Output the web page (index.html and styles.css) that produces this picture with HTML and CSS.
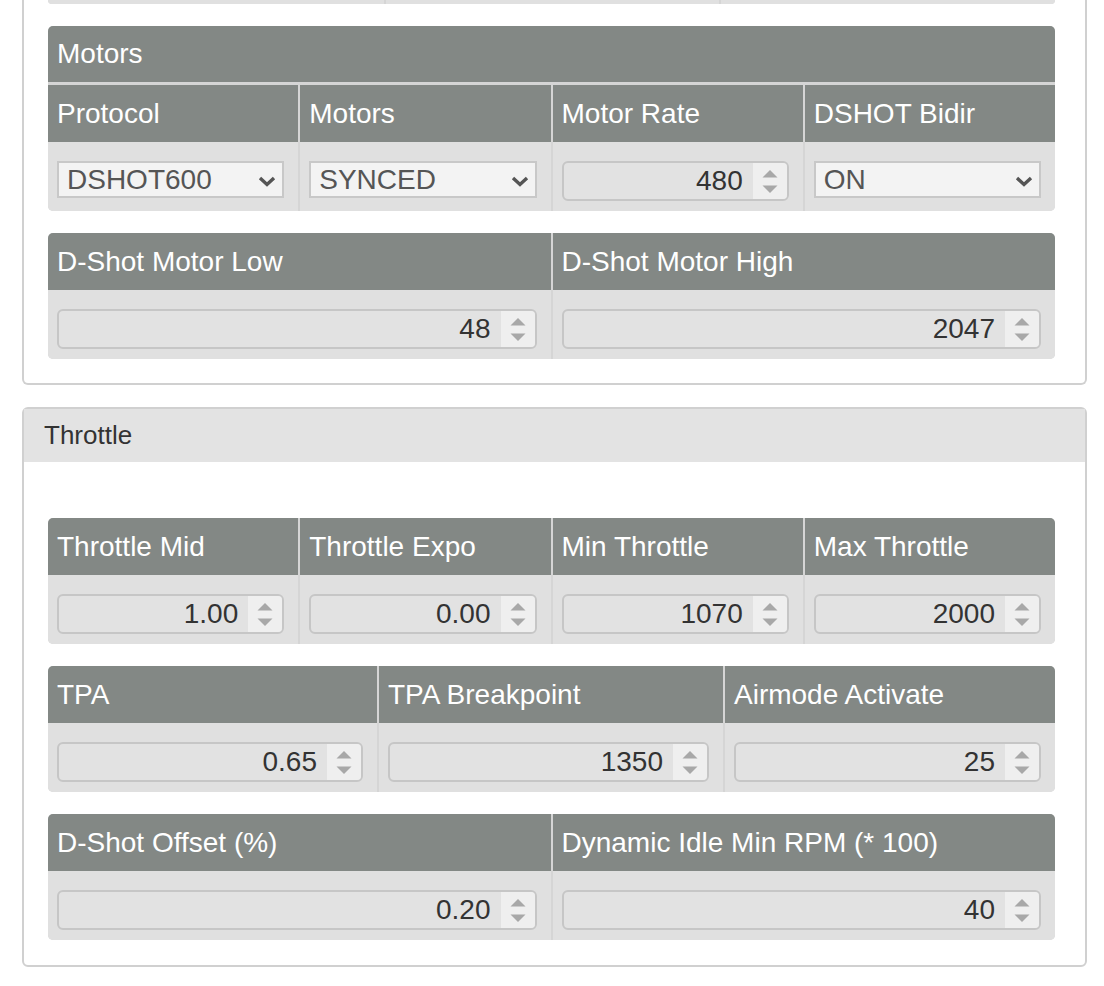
FILE: index.html
```html
<!DOCTYPE html>
<html lang="en">
<head>
  <meta charset="UTF-8">
  <title>Motors / Throttle</title>
  <link rel="stylesheet" href="styles.css">
</head>
<body>
  <div class="page">

    <!-- 모터 설정 (위쪽은 스크롤로 잘림) -->
    <div class="panel cut">
      <div class="panel-body">
        <div class="tbl sliver">
          <div class="tbl-grid cols-3">
            <div class="td"></div>
            <div class="td"></div>
            <div class="td"></div>
          </div>
        </div>

        <div class="tbl">
          <div class="tbl-title">Motors</div>
          <div class="tbl-grid cols-4">
            <div class="th">Protocol</div>
            <div class="th">Motors</div>
            <div class="th">Motor Rate</div>
            <div class="th">DSHOT Bidir</div>

            <div class="td">
              <div class="sel"><span>DSHOT600</span><svg class="chev" width="18" height="11" viewBox="0 0 18 11"><polyline points="2,2 9,8.5 16,2" /></svg></div>
            </div>
            <div class="td">
              <div class="sel"><span>SYNCED</span><svg class="chev" width="18" height="11" viewBox="0 0 18 11"><polyline points="2,2 9,8.5 16,2" /></svg></div>
            </div>
            <div class="td">
              <div class="num"><span class="num-val">480</span><span class="spin"><svg width="34" height="36" viewBox="0 0 34 36"><polygon points="9.5,14.5 24.5,14.5 17,7" /><polygon points="9.5,22.5 24.5,22.5 17,30" /></svg></span></div>
            </div>
            <div class="td">
              <div class="sel"><span>ON</span><svg class="chev" width="18" height="11" viewBox="0 0 18 11"><polyline points="2,2 9,8.5 16,2" /></svg></div>
            </div>
          </div>
        </div>

        <div class="tbl">
          <div class="tbl-grid cols-2">
            <div class="th">D-Shot Motor Low</div>
            <div class="th">D-Shot Motor High</div>

            <div class="td">
              <div class="num"><span class="num-val">48</span><span class="spin"><svg width="34" height="36" viewBox="0 0 34 36"><polygon points="9.5,14.5 24.5,14.5 17,7" /><polygon points="9.5,22.5 24.5,22.5 17,30" /></svg></span></div>
            </div>
            <div class="td">
              <div class="num"><span class="num-val">2047</span><span class="spin"><svg width="34" height="36" viewBox="0 0 34 36"><polygon points="9.5,14.5 24.5,14.5 17,7" /><polygon points="9.5,22.5 24.5,22.5 17,30" /></svg></span></div>
            </div>
          </div>
        </div>
      </div>
    </div>

    <!-- 스로틀 설정 -->
    <div class="panel">
      <div class="panel-head">Throttle</div>
      <div class="panel-body spaced">
        <div class="tbl">
          <div class="tbl-grid cols-4">
            <div class="th">Throttle Mid</div>
            <div class="th">Throttle Expo</div>
            <div class="th">Min Throttle</div>
            <div class="th">Max Throttle</div>

            <div class="td">
              <div class="num"><span class="num-val">1.00</span><span class="spin"><svg width="34" height="36" viewBox="0 0 34 36"><polygon points="9.5,14.5 24.5,14.5 17,7" /><polygon points="9.5,22.5 24.5,22.5 17,30" /></svg></span></div>
            </div>
            <div class="td">
              <div class="num"><span class="num-val">0.00</span><span class="spin"><svg width="34" height="36" viewBox="0 0 34 36"><polygon points="9.5,14.5 24.5,14.5 17,7" /><polygon points="9.5,22.5 24.5,22.5 17,30" /></svg></span></div>
            </div>
            <div class="td">
              <div class="num"><span class="num-val">1070</span><span class="spin"><svg width="34" height="36" viewBox="0 0 34 36"><polygon points="9.5,14.5 24.5,14.5 17,7" /><polygon points="9.5,22.5 24.5,22.5 17,30" /></svg></span></div>
            </div>
            <div class="td">
              <div class="num"><span class="num-val">2000</span><span class="spin"><svg width="34" height="36" viewBox="0 0 34 36"><polygon points="9.5,14.5 24.5,14.5 17,7" /><polygon points="9.5,22.5 24.5,22.5 17,30" /></svg></span></div>
            </div>
          </div>
        </div>

        <div class="tbl">
          <div class="tbl-grid cols-tpa">
            <div class="th">TPA</div>
            <div class="th">TPA Breakpoint</div>
            <div class="th">Airmode Activate</div>

            <div class="td">
              <div class="num"><span class="num-val">0.65</span><span class="spin"><svg width="34" height="36" viewBox="0 0 34 36"><polygon points="9.5,14.5 24.5,14.5 17,7" /><polygon points="9.5,22.5 24.5,22.5 17,30" /></svg></span></div>
            </div>
            <div class="td">
              <div class="num"><span class="num-val">1350</span><span class="spin"><svg width="34" height="36" viewBox="0 0 34 36"><polygon points="9.5,14.5 24.5,14.5 17,7" /><polygon points="9.5,22.5 24.5,22.5 17,30" /></svg></span></div>
            </div>
            <div class="td">
              <div class="num"><span class="num-val">25</span><span class="spin"><svg width="34" height="36" viewBox="0 0 34 36"><polygon points="9.5,14.5 24.5,14.5 17,7" /><polygon points="9.5,22.5 24.5,22.5 17,30" /></svg></span></div>
            </div>
          </div>
        </div>

        <div class="tbl">
          <div class="tbl-grid cols-2">
            <div class="th">D-Shot Offset (%)</div>
            <div class="th">Dynamic Idle Min RPM (* 100)</div>

            <div class="td">
              <div class="num"><span class="num-val">0.20</span><span class="spin"><svg width="34" height="36" viewBox="0 0 34 36"><polygon points="9.5,14.5 24.5,14.5 17,7" /><polygon points="9.5,22.5 24.5,22.5 17,30" /></svg></span></div>
            </div>
            <div class="td">
              <div class="num"><span class="num-val">40</span><span class="spin"><svg width="34" height="36" viewBox="0 0 34 36"><polygon points="9.5,14.5 24.5,14.5 17,7" /><polygon points="9.5,22.5 24.5,22.5 17,30" /></svg></span></div>
            </div>
          </div>
        </div>
      </div>
    </div>

  </div>
</body>
</html>
```

FILE: styles.css
```css
body {
  margin: 0;
  padding: 0;
  font-family: "Liberation Sans", Arial, Helvetica, sans-serif;
  background: #fff;
}
.page {
  width: 1065px;
  margin-left: 22px;
}
.panel {
  border: 2px solid #d0d0d0;
  border-radius: 6px;
  margin-bottom: 22px;
}
/* 위쪽이 잘린 패널 */
.panel.cut {
  border-top: none;
  border-radius: 0 0 6px 6px;
}
.panel-head {
  background: #e3e3e3;
  color: #333;
  font-size: 26px;
  line-height: 31px;
  padding: 11px 20px;
}
.panel-body {
  display: flex;
  flex-direction: column;
  gap: 22px;
  padding: 0 30px 24px 24px;
}
.panel-body.spaced {
  padding-top: 56px;
  padding-bottom: 25px;
}

/* 파라미터 표 */
.tbl {
  background: #d5d5d5;
  border-radius: 5px;
  overflow: hidden;
}
.tbl.sliver {
  border-radius: 0 0 5px 5px;
}
.tbl.sliver .td {
  height: 4px;
  padding: 0;
}
.tbl-title {
  background: #838885;
  color: #fff;
  font-size: 28px;
  line-height: 32px;
  padding: 12px 9px;
  margin-bottom: 3px;
}
.tbl-grid {
  display: grid;
  column-gap: 2px;
}
.cols-2 {
  grid-template-columns: 1fr 1fr;
}
.cols-3 {
  grid-template-columns: 336fr 333fr 334fr;
}
.cols-4 {
  grid-template-columns: 1fr 1fr 1fr 1fr;
}
.cols-tpa {
  grid-template-columns: 329fr 344fr 330fr;
}
.th {
  background: #838885;
  color: #fff;
  font-size: 28px;
  line-height: 32px;
  padding: 13px 9px 12px;
  white-space: nowrap;
}
.td {
  background: #e0e0e0;
  padding: 19px 14px 10px 9px;
}

/* 선택 상자 */
.sel {
  display: flex;
  align-items: center;
  justify-content: space-between;
  height: 37px;
  box-sizing: border-box;
  border: 2px solid #c8c8c8;
  background: #f3f3f3;
  padding: 1px 6px 0 8px;
  font-size: 28px;
  color: #555;
}
.chev {
  display: block;
  margin-top: 3px;
}
.chev polyline {
  fill: none;
  stroke: #555;
  stroke-width: 3.4;
}

/* 숫자 입력 */
.num {
  display: flex;
  height: 40px;
  box-sizing: border-box;
  border: 2px solid #c6c6c6;
  border-radius: 6px;
  background: #e2e2e2;
  overflow: hidden;
}
.num-val {
  flex: 1;
  text-align: right;
  font-size: 28px;
  line-height: 36px;
  color: #333;
  padding-right: 10px;
}
.spin {
  width: 34px;
  background: #efefef;
}
.spin svg {
  display: block;
}
.spin polygon {
  fill: #a8a8a8;
}
```
